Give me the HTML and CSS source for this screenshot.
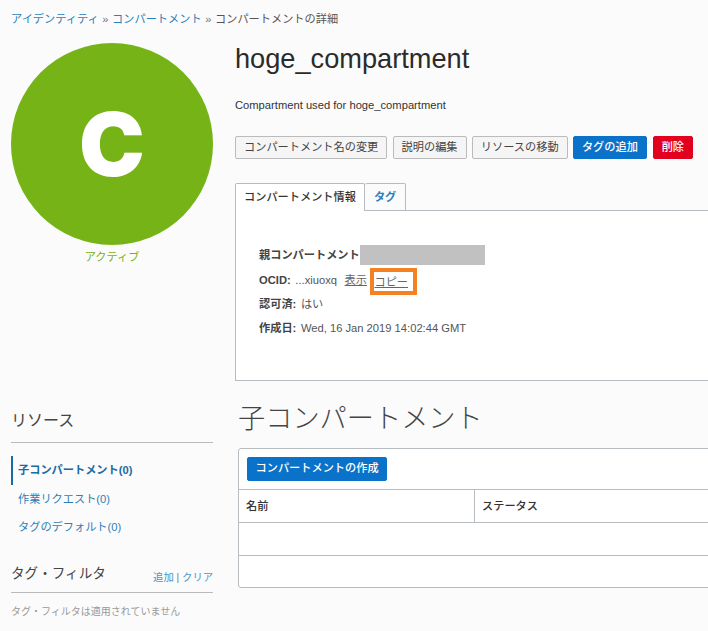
FILE: index.html
```html
<!DOCTYPE html>
<html lang="ja">
<head>
<meta charset="utf-8">
<title>コンパートメントの詳細</title>
<link rel="stylesheet" href="styles.css">
</head>
<body>
<nav class="crumbs"><a>アイデンティティ</a> <span class="sep">»</span> <a>コンパートメント</a> <span class="sep">»</span> コンパートメントの詳細</nav>
<section class="top">
  <div class="status">
    <div class="avatar">C</div>
    <div class="state">アクティブ</div>
  </div>
  <div class="detail">
    <h1>hoge_compartment</h1>
    <p class="desc">Compartment used for hoge_compartment</p>
    <div class="actions">
      <button class="btn">コンパートメント名の変更</button>
      <button class="btn">説明の編集</button>
      <button class="btn">リソースの移動</button>
      <button class="btn primary">タグの追加</button>
      <button class="btn danger">削除</button>
    </div>
    <div class="tabs">
      <div class="tab active">コンパートメント情報</div>
      <div class="tab link">タグ</div>
    </div>
    <div class="panel">
      <div class="row parent"><b>親コンパートメント</b><span class="redact"></span></div>
      <div class="row ocid"><b>OCID:</b> ...xiuoxq <a class="act show">表示</a><span class="callout"><a class="act">コピー</a></span></div>
      <div class="row"><b>認可済:</b> はい</div>
      <div class="row"><b>作成日:</b> Wed, 16 Jan 2019 14:02:44 GMT</div>
    </div>
  </div>
</section>
<section class="bottom">
  <aside class="side">
    <h2>リソース</h2>
    <ul class="menu">
      <li class="current">子コンパートメント(0)</li>
      <li>作業リクエスト(0)</li>
      <li>タグのデフォルト(0)</li>
    </ul>
    <div class="filter-head">
      <h3>タグ・フィルタ</h3>
      <span class="filter-links"><a>追加</a> | <a>クリア</a></span>
    </div>
    <p class="filter-note">タグ・フィルタは適用されていません</p>
  </aside>
  <div class="children">
    <h2 class="big">子コンパートメント</h2>
    <div class="table">
      <div class="toolbar"><button class="btn primary">コンパートメントの作成</button></div>
      <div class="thead"><div class="th name">名前</div><div class="th">ステータス</div></div>
      <div class="tr"></div>
      <div class="tr last"></div>
    </div>
  </div>
</section>
</body>
</html>
```
FILE: styles.css
```css
* { box-sizing: border-box; }
html, body { height: 100%; }
body {
  margin: 0;
  width: 708px;
  height: 631px;
  overflow: hidden;
  background: #fbfbfb;
  color: #333;
  font-family: "Liberation Sans", "Noto Sans CJK JP", sans-serif;
  font-size: 11.2px;
}
a { color: #2d7fb8; }
.crumbs { padding: 12px 0 0 11px; height: 43px; line-height: 14px; color: #555; }
.sep { color: #777; margin: 0 0.5px; }
.top { display: flex; align-items: flex-start; }
.status { width: 202px; margin-left: 11px; flex: none; }
.avatar {
  width: 202px; height: 202px; border-radius: 50%;
  background: #76b316; color: #fff;
  display: flex; align-items: center; justify-content: center;
  font-family: Inter, "Liberation Sans", sans-serif;
  font-size: 88px; font-weight: 900; line-height: 1;
}
.state { margin-top: 5px; text-align: center; color: #76b316; line-height: 14px; }
.detail { margin-left: 22px; width: 520px; flex: none; }
h1 { margin: 0; font-size: 27.2px; font-weight: 400; line-height: 32px; color: #2b2b2b; }
.desc { margin: 23px 0 0; height: 14px; line-height: 14px; }
.actions { display: flex; gap: 5.3px; margin-top: 24px; }
.btn {
  height: 23px; padding: 0 8px; margin: 0;
  border: 1px solid #bbb; border-radius: 2px;
  background: #f5f5f5; color: #444;
  font: 11.2px/1 "Liberation Sans", "Noto Sans CJK JP", sans-serif;
  white-space: nowrap;
}
.btn.primary { background: #0b72c9; border-color: #0b72c9; color: #fff; font-weight: 500; }
.btn.danger { background: #e2001f; border-color: #e2001f; color: #fff; font-weight: 500; margin-left: 0.5px; }
.tabs { display: flex; margin-top: 24px; position: relative; z-index: 1; }
.tab {
  height: 28px; padding: 0 8px; line-height: 26px;
  border: 1px solid #b7bcc0; border-bottom: 0; border-radius: 2px 2px 0 0;
  background: #fff; color: #333; font-weight: 500;
}
.tab.link { color: #2d7fb8; background: #fbfbfb; border-left: 0; height: 27px; padding: 0 9px; font-weight: 700; }
.panel {
  margin-top: -1px; height: 171px; padding: 34px 0 0 23px;
  border: 1px solid #b7bcc0; background: #fff;
}
.row { height: 24px; line-height: 20px; color: #555; display: flex; align-items: center; gap: 1.5px; white-space: pre; }
.row b { color: #444; }
.row.parent { height: 20px; gap: 0; margin-bottom: 3px; }
.redact { width: 125px; height: 20px; background: #c1c1c1; }
.act { color: #666; text-decoration: underline; }
.show { margin-left: 3px; }
.callout { border: 4px solid #f58220; background: #fff; width: 47px; height: 27px; display: flex; align-items: center; margin: -2px 0 0 2px; }
.row.ocid { height: 27px; padding-top: 2px; margin-bottom: -3px; align-items: flex-start; }
.bottom { display: flex; align-items: flex-start; margin-top: 21px; }
.side { width: 202px; margin-left: 11px; flex: none; padding-top: 7px; }
.side h2 { margin: 0; padding: 0; height: 34px; font-size: 16px; font-weight: 400; line-height: 24px; color: #444; border-bottom: 1px solid #bbb; }
.menu { list-style: none; margin: 13px 0 0; padding: 0; }
.menu li { height: 28.5px; line-height: 28.5px; padding-left: 7px; color: #2d7fb8; }
.menu li.current { border-left: 2px solid #1a6aa5; padding-left: 5px; color: #1a6aa5; font-weight: 700; }
.filter-head { display: flex; justify-content: space-between; align-items: flex-end; margin-top: 20px; padding-bottom: 7px; border-bottom: 1px solid #bbb; height: 31px; }
h3 { margin: 0 0 1px; font-size: 13.6px; font-weight: 400; line-height: 20px; color: #444; }
.filter-links { font-size: 10.3px; color: #777; line-height: 14px; }
.filter-links a { color: #4a94c8; }
.filter-note { margin: 12px 0 0; font-size: 10px; color: #999; line-height: 14px; }
.children { margin-left: 26px; width: 480px; flex: none; }
.big { margin: 0 0 0 -1px; font-size: 27.2px; font-weight: 200; line-height: 34px; color: #444; height: 46px; }
.table { border: 1px solid #b7bcc0; border-radius: 3px 0 0 3px; background: #fff; height: 140px; margin-left: -1px; }
.toolbar { height: 41px; padding: 8px 8px; border-bottom: 1px solid #b7bcc0; }
.toolbar .btn { height: 24px; padding: 0 7.5px; }
.thead { display: flex; height: 33px; border-bottom: 1px solid #b7bcc0; }
.th { line-height: 32px; padding-left: 7px; font-weight: 500; color: #333; flex: 1; }
.th.name { flex: none; width: 236px; border-right: 1px solid #b7bcc0; }
.tr { height: 33px; border-bottom: 1px solid #b7bcc0; }
.tr.last { border-bottom: 0; }
```
